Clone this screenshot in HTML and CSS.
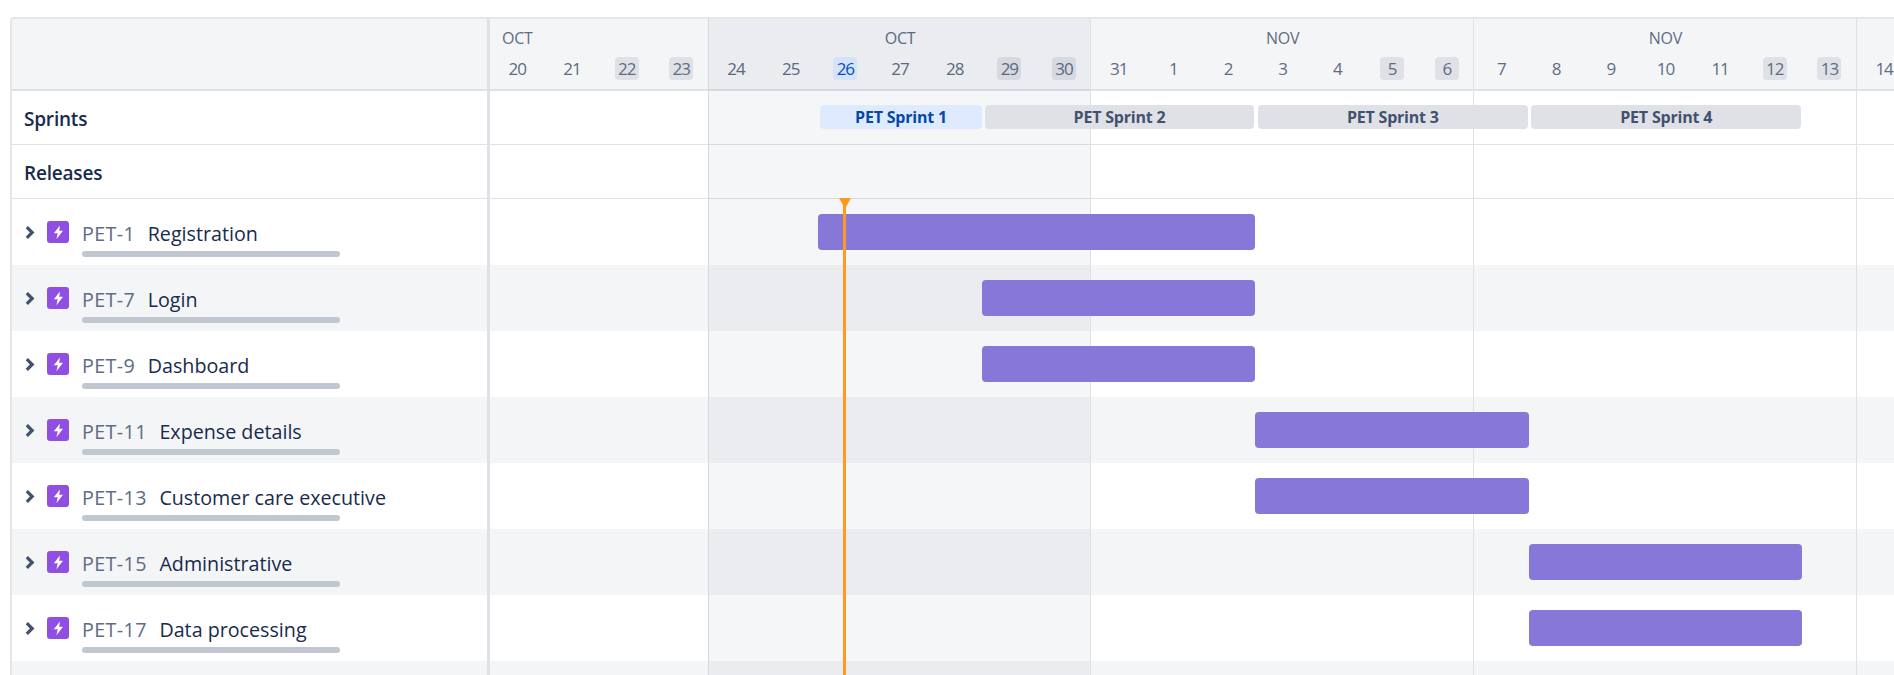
FILE: index.html
```html
<!DOCTYPE html>
<html>
<head>
    <title>Roadmap</title>
    <link rel="stylesheet" href="styles.css">
</head>
<body>
    <div class="gantt">
        <div class="row head">
            <div class="side"></div>
            <div class="timeline">
                <div class="month first">OCT</div>
                <div class="month week">OCT</div>
                <div class="month week">NOV</div>
                <div class="month week">NOV</div>
                <div class="month"></div>
                <div class="day"><span>20</span></div>
                <div class="day"><span>21</span></div>
                <div class="day"><span class="off">22</span></div>
                <div class="day"><span class="off">23</span></div>
                <div class="day"><span>24</span></div>
                <div class="day"><span>25</span></div>
                <div class="day"><span class="now">26</span></div>
                <div class="day"><span>27</span></div>
                <div class="day"><span>28</span></div>
                <div class="day"><span class="off">29</span></div>
                <div class="day"><span class="off">30</span></div>
                <div class="day"><span>31</span></div>
                <div class="day"><span>1</span></div>
                <div class="day"><span>2</span></div>
                <div class="day"><span>3</span></div>
                <div class="day"><span>4</span></div>
                <div class="day"><span class="off">5</span></div>
                <div class="day"><span class="off">6</span></div>
                <div class="day"><span>7</span></div>
                <div class="day"><span>8</span></div>
                <div class="day"><span>9</span></div>
                <div class="day"><span>10</span></div>
                <div class="day"><span>11</span></div>
                <div class="day"><span class="off">12</span></div>
                <div class="day"><span class="off">13</span></div>
                <div class="day"><span>14</span></div>
            </div>
        </div>

        <div class="row band">
            <div class="side label">Sprints</div>
            <div class="timeline sprints">
                <div class="sprint active s1">PET Sprint 1</div>
                <div class="sprint s2">PET Sprint 2</div>
                <div class="sprint s3">PET Sprint 3</div>
                <div class="sprint s4">PET Sprint 4</div>
            </div>
        </div>

        <div class="row band">
            <div class="side label">Releases</div>
            <div class="timeline"></div>
        </div>

        <div class="row issue">
            <div class="side">
                <svg class="chevron" viewBox="0 0 10 14"><path d="M2.5 2 7.5 7l-5 5"/></svg>
                <svg class="epic" viewBox="0 0 22 22"><rect width="22" height="22" rx="3"/><path d="M13 4.5 6.800 12.300h3.900L9.400 18.200 16 9.700h-3.800z"/></svg>
                <div class="info">
                    <div class="title"><span class="key">PET-1</span>Registration</div>
                    <div class="progress"></div>
                </div>
            </div>
            <div class="timeline"><div class="bar b1"></div></div>
        </div>

        <div class="row issue">
            <div class="side">
                <svg class="chevron" viewBox="0 0 10 14"><path d="M2.5 2 7.5 7l-5 5"/></svg>
                <svg class="epic" viewBox="0 0 22 22"><rect width="22" height="22" rx="3"/><path d="M13 4.5 6.800 12.300h3.900L9.400 18.200 16 9.700h-3.800z"/></svg>
                <div class="info">
                    <div class="title"><span class="key">PET-7</span>Login</div>
                    <div class="progress"></div>
                </div>
            </div>
            <div class="timeline"><div class="bar b2"></div></div>
        </div>

        <div class="row issue">
            <div class="side">
                <svg class="chevron" viewBox="0 0 10 14"><path d="M2.5 2 7.5 7l-5 5"/></svg>
                <svg class="epic" viewBox="0 0 22 22"><rect width="22" height="22" rx="3"/><path d="M13 4.5 6.800 12.300h3.900L9.400 18.200 16 9.700h-3.800z"/></svg>
                <div class="info">
                    <div class="title"><span class="key">PET-9</span>Dashboard</div>
                    <div class="progress"></div>
                </div>
            </div>
            <div class="timeline"><div class="bar b2"></div></div>
        </div>

        <div class="row issue">
            <div class="side">
                <svg class="chevron" viewBox="0 0 10 14"><path d="M2.5 2 7.5 7l-5 5"/></svg>
                <svg class="epic" viewBox="0 0 22 22"><rect width="22" height="22" rx="3"/><path d="M13 4.5 6.800 12.300h3.900L9.400 18.200 16 9.700h-3.800z"/></svg>
                <div class="info">
                    <div class="title"><span class="key">PET-11</span>Expense details</div>
                    <div class="progress"></div>
                </div>
            </div>
            <div class="timeline"><div class="bar b3"></div></div>
        </div>

        <div class="row issue">
            <div class="side">
                <svg class="chevron" viewBox="0 0 10 14"><path d="M2.5 2 7.5 7l-5 5"/></svg>
                <svg class="epic" viewBox="0 0 22 22"><rect width="22" height="22" rx="3"/><path d="M13 4.5 6.800 12.300h3.900L9.400 18.200 16 9.700h-3.800z"/></svg>
                <div class="info">
                    <div class="title"><span class="key">PET-13</span>Customer care executive</div>
                    <div class="progress"></div>
                </div>
            </div>
            <div class="timeline"><div class="bar b3"></div></div>
        </div>

        <div class="row issue">
            <div class="side">
                <svg class="chevron" viewBox="0 0 10 14"><path d="M2.5 2 7.5 7l-5 5"/></svg>
                <svg class="epic" viewBox="0 0 22 22"><rect width="22" height="22" rx="3"/><path d="M13 4.5 6.800 12.300h3.900L9.400 18.200 16 9.700h-3.800z"/></svg>
                <div class="info">
                    <div class="title"><span class="key">PET-15</span>Administrative</div>
                    <div class="progress"></div>
                </div>
            </div>
            <div class="timeline"><div class="bar b4"></div></div>
        </div>

        <div class="row issue">
            <div class="side">
                <svg class="chevron" viewBox="0 0 10 14"><path d="M2.5 2 7.5 7l-5 5"/></svg>
                <svg class="epic" viewBox="0 0 22 22"><rect width="22" height="22" rx="3"/><path d="M13 4.5 6.800 12.300h3.900L9.400 18.200 16 9.700h-3.800z"/></svg>
                <div class="info">
                    <div class="title"><span class="key">PET-17</span>Data processing</div>
                    <div class="progress"></div>
                </div>
            </div>
            <div class="timeline"><div class="bar b4"></div></div>
        </div>

        <div class="row issue"><div class="side"></div><div class="timeline"></div></div>

        <!-- week columns, laid over the row backgrounds -->
        <div class="weeks">
            <div class="wk w4"></div>
            <div class="wk w7 current"></div>
            <div class="wk w7"></div>
            <div class="wk w7"></div>
            <div class="wk w1"></div>
        </div>

        <div class="today"></div>
    </div>
</body>
</html>
```

FILE: styles.css
```css
html, body {
    height: 100%;
    overflow: hidden;
}
body {
    margin: 0;
    padding: 17px 0 0 10px;
    box-sizing: border-box;
    background-color: #fff;
    font-family: "Open Sans", "Noto Sans", sans-serif;
    color: #172b4d;
}
.gantt {
    position: relative;
    width: 1950px;
    height: 656px;
    border-top: 2px solid #e4e6ea;
    border-left: 2px solid #e4e6ea;
    border-top-left-radius: 4px;
    overflow: hidden;
}
.row {
    display: flex;
}
.side {
    flex: none;
    box-sizing: border-box;
    width: 478px;
    border-right: 3px solid #dfe1e6;
    display: flex;
    align-items: center;
}
.timeline {
    display: grid;
    grid-template-columns: repeat(26, 54.68px);
    grid-auto-rows: min-content;
}

/* header */
.head {
    height: 72px;
    box-sizing: border-box;
    border-bottom: 2px solid #dfe1e6;
    background-color: #f4f5f7;
}
.month {
    height: 38px;
    line-height: 38px;
    font-size: 16px;
    letter-spacing: -0.2px;
    text-align: center;
    color: #5e6c84;
}
.month.first {
    grid-column: span 4;
    text-align: left;
    padding-left: 12px;
}
.month.week {
    grid-column: span 7;
}
.day {
    display: flex;
    justify-content: center;
    font-size: 17px;
    letter-spacing: -1px;
    color: #5e6c84;
}
.day span {
    width: 24px;
    height: 23px;
    line-height: 23px;
    border-radius: 4px;
    text-align: center;
}
.day .off {
    background-color: #dfe1e6;
}
.day .now {
    background-color: #deebff;
    color: #0052cc;
}

/* sprints and releases */
.band {
    height: 53px;
    border-bottom: 1px solid #dfe1e6;
}
.label {
    padding: 2px 0 0 12px;
    font-size: 19px;
    font-weight: 600;
    letter-spacing: -0.2px;
}
.sprints {
    padding-top: 14px;
}
.sprint {
    position: relative;
    z-index: 2;
    height: 24px;
    line-height: 24px;
    margin: 0 1px 0 2.5px;
    border-radius: 4px;
    background-color: #dfe1e6;
    color: #42526e;
    font-size: 16px;
    font-weight: 700;
    letter-spacing: -0.2px;
    text-align: center;
}
.sprint.active {
    background-color: #deebff;
    color: #0747a6;
}
.s1 { grid-column: 7 / 10; margin: 0 0 0 2px; }
.s2 { grid-column: 10 / 15; }
.s3 { grid-column: 15 / 20; }
.s4 { grid-column: 20 / 25; }

/* issue rows */
.issue {
    height: 66px;
}
.issue:nth-child(odd) {
    background-color: #f4f5f7;
}
.issue .side {
    padding-left: 12px;
    padding-top: 2px;
}
.chevron {
    width: 11px;
    height: 15px;
    margin-right: 12px;
    margin-bottom: 2px;
    fill: none;
    stroke: #42526e;
    stroke-width: 3;
}
.epic {
    width: 22px;
    height: 22px;
    margin-bottom: 2px;
}
.epic rect {
    fill: #904ee2;
}
.epic path {
    fill: #fff;
}
.info {
    margin-left: 13px;
    padding-top: 12px;
}
.title {
    height: 24px;
    line-height: 24px;
    font-size: 19.7px;
    white-space: nowrap;
}
.key {
    margin-right: 12.5px;
    letter-spacing: 0.4px;
    color: #5e6c84;
}
.progress {
    width: 258px;
    height: 6px;
    margin-top: 5px;
    border-radius: 3px;
    background-color: #c1c7d0;
}
.bar {
    position: relative;
    z-index: 2;
    height: 36px;
    margin-top: 15px;
    border-radius: 4px;
    background-color: #8777d9;
}
.b1 { grid-column: 7 / 15; }
.b2 { grid-column: 10 / 15; }
.b3 { grid-column: 15 / 20; }
.b4 { grid-column: 20 / 25; }

/* week columns over the rows */
.weeks {
    position: absolute;
    z-index: 1;
    top: 0;
    bottom: 0;
    left: 477px;
    display: flex;
}
.wk {
    box-sizing: border-box;
    border-left: 1px solid #dfe1e6;
}
.wk.w4 { width: 218.72px; border-left: 0; }
.wk.w7 { width: 382.76px; }
.wk.w1 { width: 54.68px; }
.wk.current {
    background-color: rgba(9, 30, 66, 0.04);
    border-left-color: #d5d7de;
}

/* today marker */
.today {
    position: absolute;
    z-index: 3;
    top: 179px;
    bottom: 0;
    left: 831px;
    width: 3px;
    background-color: #ff991f;
}
.today::before {
    content: "";
    position: absolute;
    top: 0;
    left: -4.5px;
    border-top: 11px solid #ff991f;
    border-left: 6px solid transparent;
    border-right: 6px solid transparent;
}
```
